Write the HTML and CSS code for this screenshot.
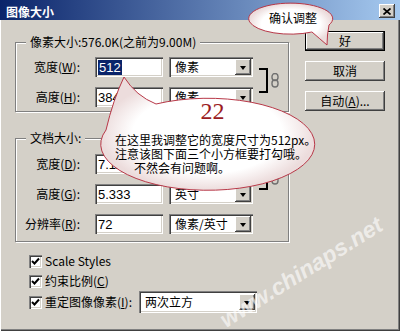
FILE: index.html
```html
<!DOCTYPE html>
<html lang="zh-CN">
<head>
  <meta charset="UTF-8">
  <title>图像大小</title>
  <link rel="stylesheet" href="styles.css">
</head>
<body>
  <div class="window">
    <div class="titlebar">
      <span class="title">图像大小</span>
      <span class="close">
        <svg width="8" height="7" viewBox="0 0 8 7"><path d="M0.5 0.5 L7.5 6.5 M7.5 0.5 L0.5 6.5" stroke="#000" stroke-width="1.7"/></svg>
      </span>
    </div>

    <div class="content">
      <div class="main">
        <fieldset class="group">
          <legend>像素大小:576.0K(之前为9.00M)</legend>
          <div class="rows">
            <label>宽度(<u>W</u>):</label>
            <div class="field"><span class="selected">512</span></div>
            <div class="select">像素<span class="arrow"></span></div>
            <div class="bracket"></div>
            <svg class="link" width="8" height="15" viewBox="0 0 8 15">
              <rect x="1" y="0.5" width="6" height="7" rx="3" fill="none" stroke="#707070" stroke-width="1.4"/>
              <rect x="1" y="7" width="6" height="7" rx="3" fill="none" stroke="#707070" stroke-width="1.4"/>
            </svg>
            <label>高度(<u>H</u>):</label>
            <div class="field">384</div>
            <div class="select">像素<span class="arrow"></span></div>
          </div>
        </fieldset>

        <fieldset class="group doc">
          <legend>文档大小:</legend>
          <div class="rows">
            <label>宽度(<u>D</u>):</label>
            <div class="field">7.111</div>
            <div class="select">英寸<span class="arrow"></span></div>
            <div class="bracket"></div>
            <svg class="link" width="8" height="15" viewBox="0 0 8 15">
              <rect x="1" y="0.5" width="6" height="7" rx="3" fill="none" stroke="#707070" stroke-width="1.4"/>
              <rect x="1" y="7" width="6" height="7" rx="3" fill="none" stroke="#707070" stroke-width="1.4"/>
            </svg>
            <label>高度(<u>G</u>):</label>
            <div class="field">5.333</div>
            <div class="select">英寸<span class="arrow"></span></div>
            <label>分辨率(<u>R</u>):</label>
            <div class="field">72</div>
            <div class="select">像素/英寸<span class="arrow"></span></div>
          </div>
        </fieldset>

        <div class="checks">
          <div class="check-row"><span class="box"><svg width="9" height="9" viewBox="0 0 9 9"><path d="M1 4 L3.5 6.5 L8 1.5" fill="none" stroke="#000" stroke-width="2"/></svg></span>Scale Styles</div>
          <div class="check-row"><span class="box"><svg width="9" height="9" viewBox="0 0 9 9"><path d="M1 4 L3.5 6.5 L8 1.5" fill="none" stroke="#000" stroke-width="2"/></svg></span>约束比例(<u>C</u>)</div>
          <div class="check-row tall"><span class="box"><svg width="9" height="9" viewBox="0 0 9 9"><path d="M1 4 L3.5 6.5 L8 1.5" fill="none" stroke="#000" stroke-width="2"/></svg></span>重定图像像素(<u>I</u>):
            <div class="select wide">两次立方<span class="arrow"></span></div>
          </div>
        </div>
      </div>

      <div class="buttons">
        <div class="btn default">好</div>
        <div class="btn">取消</div>
        <div class="btn">自动(<u>A</u>)...</div>
      </div>
    </div>

    <div class="watermark">www.chinaps.net</div>

    <!-- bulles d'annotation -->
    <svg class="bubbles" width="400" height="331" viewBox="0 0 400 331">
      <defs>
        <radialGradient id="fillBig" cx="0.5" cy="0.5" r="0.5">
          <stop offset="0.7" stop-color="#ffffff"/>
          <stop offset="1" stop-color="#ecdcdc"/>
        </radialGradient>
      </defs>
      <path d="M329 25 A42 15.5 0 1 0 312 32 Q320 39 327 45 Q327 35 329 25 Z" fill="url(#fillBig)" stroke="#b83848" stroke-width="1"/>
      <path d="M156 104 A107 46 0 1 1 106 130 Q113 100 124 77 Q136 96 156 104 Z" fill="url(#fillBig)" stroke="#b83848" stroke-width="1"/>
    </svg>
    <div class="note-small">确认调整</div>
    <div class="note-big">
      <div class="num">22</div>
      <div>在这里我调整它的宽度尺寸为512px。</div>
      <div>注意该图下面三个小方框要打勾哦。</div>
      <div class="indent">不然会有问题啊。</div>
    </div>
  </div>
</body>
</html>
```

FILE: styles.css
```css
body {
  margin: 0;
  font-family: "Noto Sans CJK SC", sans-serif;
  font-size: 12px;
  line-height: 14px;
  color: #000;
  background: #d4d0c8;
}

.window {
  position: relative;
  width: 400px;
  height: 331px;
  box-sizing: border-box;
  background: #d4d0c8;
  box-shadow: inset 1px 0 #fff, inset -1px -1px #404040, inset -2px -2px #808080;
  overflow: hidden;
}

.titlebar {
  height: 20px;
  display: flex;
  justify-content: space-between;
  align-items: flex-start;
  padding: 0 5px 0 6px;
  background: linear-gradient(to right, #0a246a, #a6caf0);
  color: #fff;
}

.title {
  font-weight: bold;
  margin-top: 5px;
}

.close {
  width: 16px;
  height: 14px;
  margin-top: 4px;
  box-sizing: border-box;
  display: flex;
  align-items: center;
  justify-content: center;
  background: #d4d0c8;
  box-shadow: inset -1px -1px #404040, inset 1px 1px #fff, inset -2px -2px #808080;
}

.content {
  display: flex;
  padding: 11px 0 0 15px;
}

.main {
  width: 274px;
  padding-top: 4px;
}

.group {
  margin: 0;
  padding: 8px 6px 4px 6px;
  border: 1px solid #808080;
  box-shadow: 1px 1px 0 #fff, inset 1px 1px 0 #fff;
}

.group legend {
  margin-left: 4px;
  padding: 0 4px;
  background: #d4d0c8;
}

.group.doc {
  margin-top: 19px;
  padding-top: 9px;
  padding-bottom: 7px;
}

.rows {
  display: grid;
  grid-template-columns: 67px 68px 84px 9px 8px;
  grid-auto-rows: 20px;
  column-gap: 6px;
  row-gap: 10px;
  align-items: center;
}

.rows label {
  text-align: right;
  padding-right: 9px;
  white-space: nowrap;
}

.field {
  height: 20px;
  box-sizing: border-box;
  padding: 3px 3px 0;
  background: #fff;
  font-family: "Liberation Sans", sans-serif;
  font-size: 13px;
  line-height: 15px;
  box-shadow: inset 1px 1px #808080, inset 2px 2px #404040, inset -1px -1px #fff, inset -2px -2px #d4d0c8;
}

.selected {
  background: #0a246a;
  color: #fff;
  padding: 0 1px;
}

.select {
  height: 20px;
  box-sizing: border-box;
  display: flex;
  align-items: center;
  justify-content: space-between;
  padding: 2px 2px 2px 6px;
  background: #fff;
  white-space: nowrap;
  box-shadow: inset 1px 1px #808080, inset 2px 2px #404040, inset -1px -1px #fff, inset -2px -2px #d4d0c8;
}

.arrow {
  width: 16px;
  height: 16px;
  box-sizing: border-box;
  display: flex;
  align-items: center;
  justify-content: center;
  background: #d4d0c8;
  box-shadow: inset -1px -1px #404040, inset 1px 1px #fff, inset -2px -2px #808080;
}

.arrow::after {
  content: "";
  border-left: 3.5px solid transparent;
  border-right: 3.5px solid transparent;
  border-top: 4px solid #000;
  margin: 1px 1px 0 0;
}

.bracket {
  grid-column: 4;
  grid-row: 1 / span 2;
  align-self: start;
  height: 25px;
  margin-top: 11px;
  border: 2px solid #000;
  border-left: none;
  box-sizing: border-box;
}

.link {
  grid-column: 5;
  grid-row: 1 / span 2;
  margin-left: -3px;
  margin-top: -4px;
}

.checks {
  margin-top: 9px;
  padding-left: 14px;
}

.check-row {
  height: 20px;
  display: flex;
  align-items: center;
  white-space: nowrap;
}

.check-row.tall {
  height: 22px;
}

.box {
  width: 13px;
  height: 13px;
  box-sizing: border-box;
  margin-right: 3px;
  display: flex;
  align-items: center;
  justify-content: center;
  background: #fff;
  box-shadow: inset 1px 1px #808080, inset 2px 2px #404040, inset -1px -1px #fff, inset -2px -2px #d4d0c8;
}

.select.wide {
  width: 118px;
  height: 22px;
  margin-left: 7px;
}

.buttons {
  margin-left: 16px;
  width: 80px;
  display: flex;
  flex-direction: column;
  gap: 10px;
}

.btn {
  height: 20px;
  box-sizing: border-box;
  display: flex;
  align-items: center;
  justify-content: center;
  background: #d4d0c8;
  box-shadow: inset -1px -1px #404040, inset 1px 1px #fff, inset -2px -2px #808080;
}

.btn.default {
  border: 1px solid #000;
}

.watermark {
  position: absolute;
  left: 186px;
  top: 259px;
  width: 230px;
  text-align: center;
  font-family: "Liberation Sans", sans-serif;
  font-weight: bold;
  font-style: italic;
  font-size: 23px;
  line-height: 26px;
  color: rgba(255, 255, 255, 0.6);
  transform: rotate(-32deg);
}

.bubbles {
  position: absolute;
  left: 0;
  top: 0;
  pointer-events: none;
}

.note-small {
  position: absolute;
  left: 269px;
  top: 11px;
}

.note-big {
  position: absolute;
  left: 115px;
  top: 100px;
  width: 205px;
  white-space: nowrap;
}

.num {
  width: 195px;
  text-align: center;
  font-family: "Liberation Serif", serif;
  font-size: 24px;
  line-height: 22px;
  color: #9b1b22;
  margin-bottom: 11px;
}

.indent {
  padding-left: 19px;
}
```
